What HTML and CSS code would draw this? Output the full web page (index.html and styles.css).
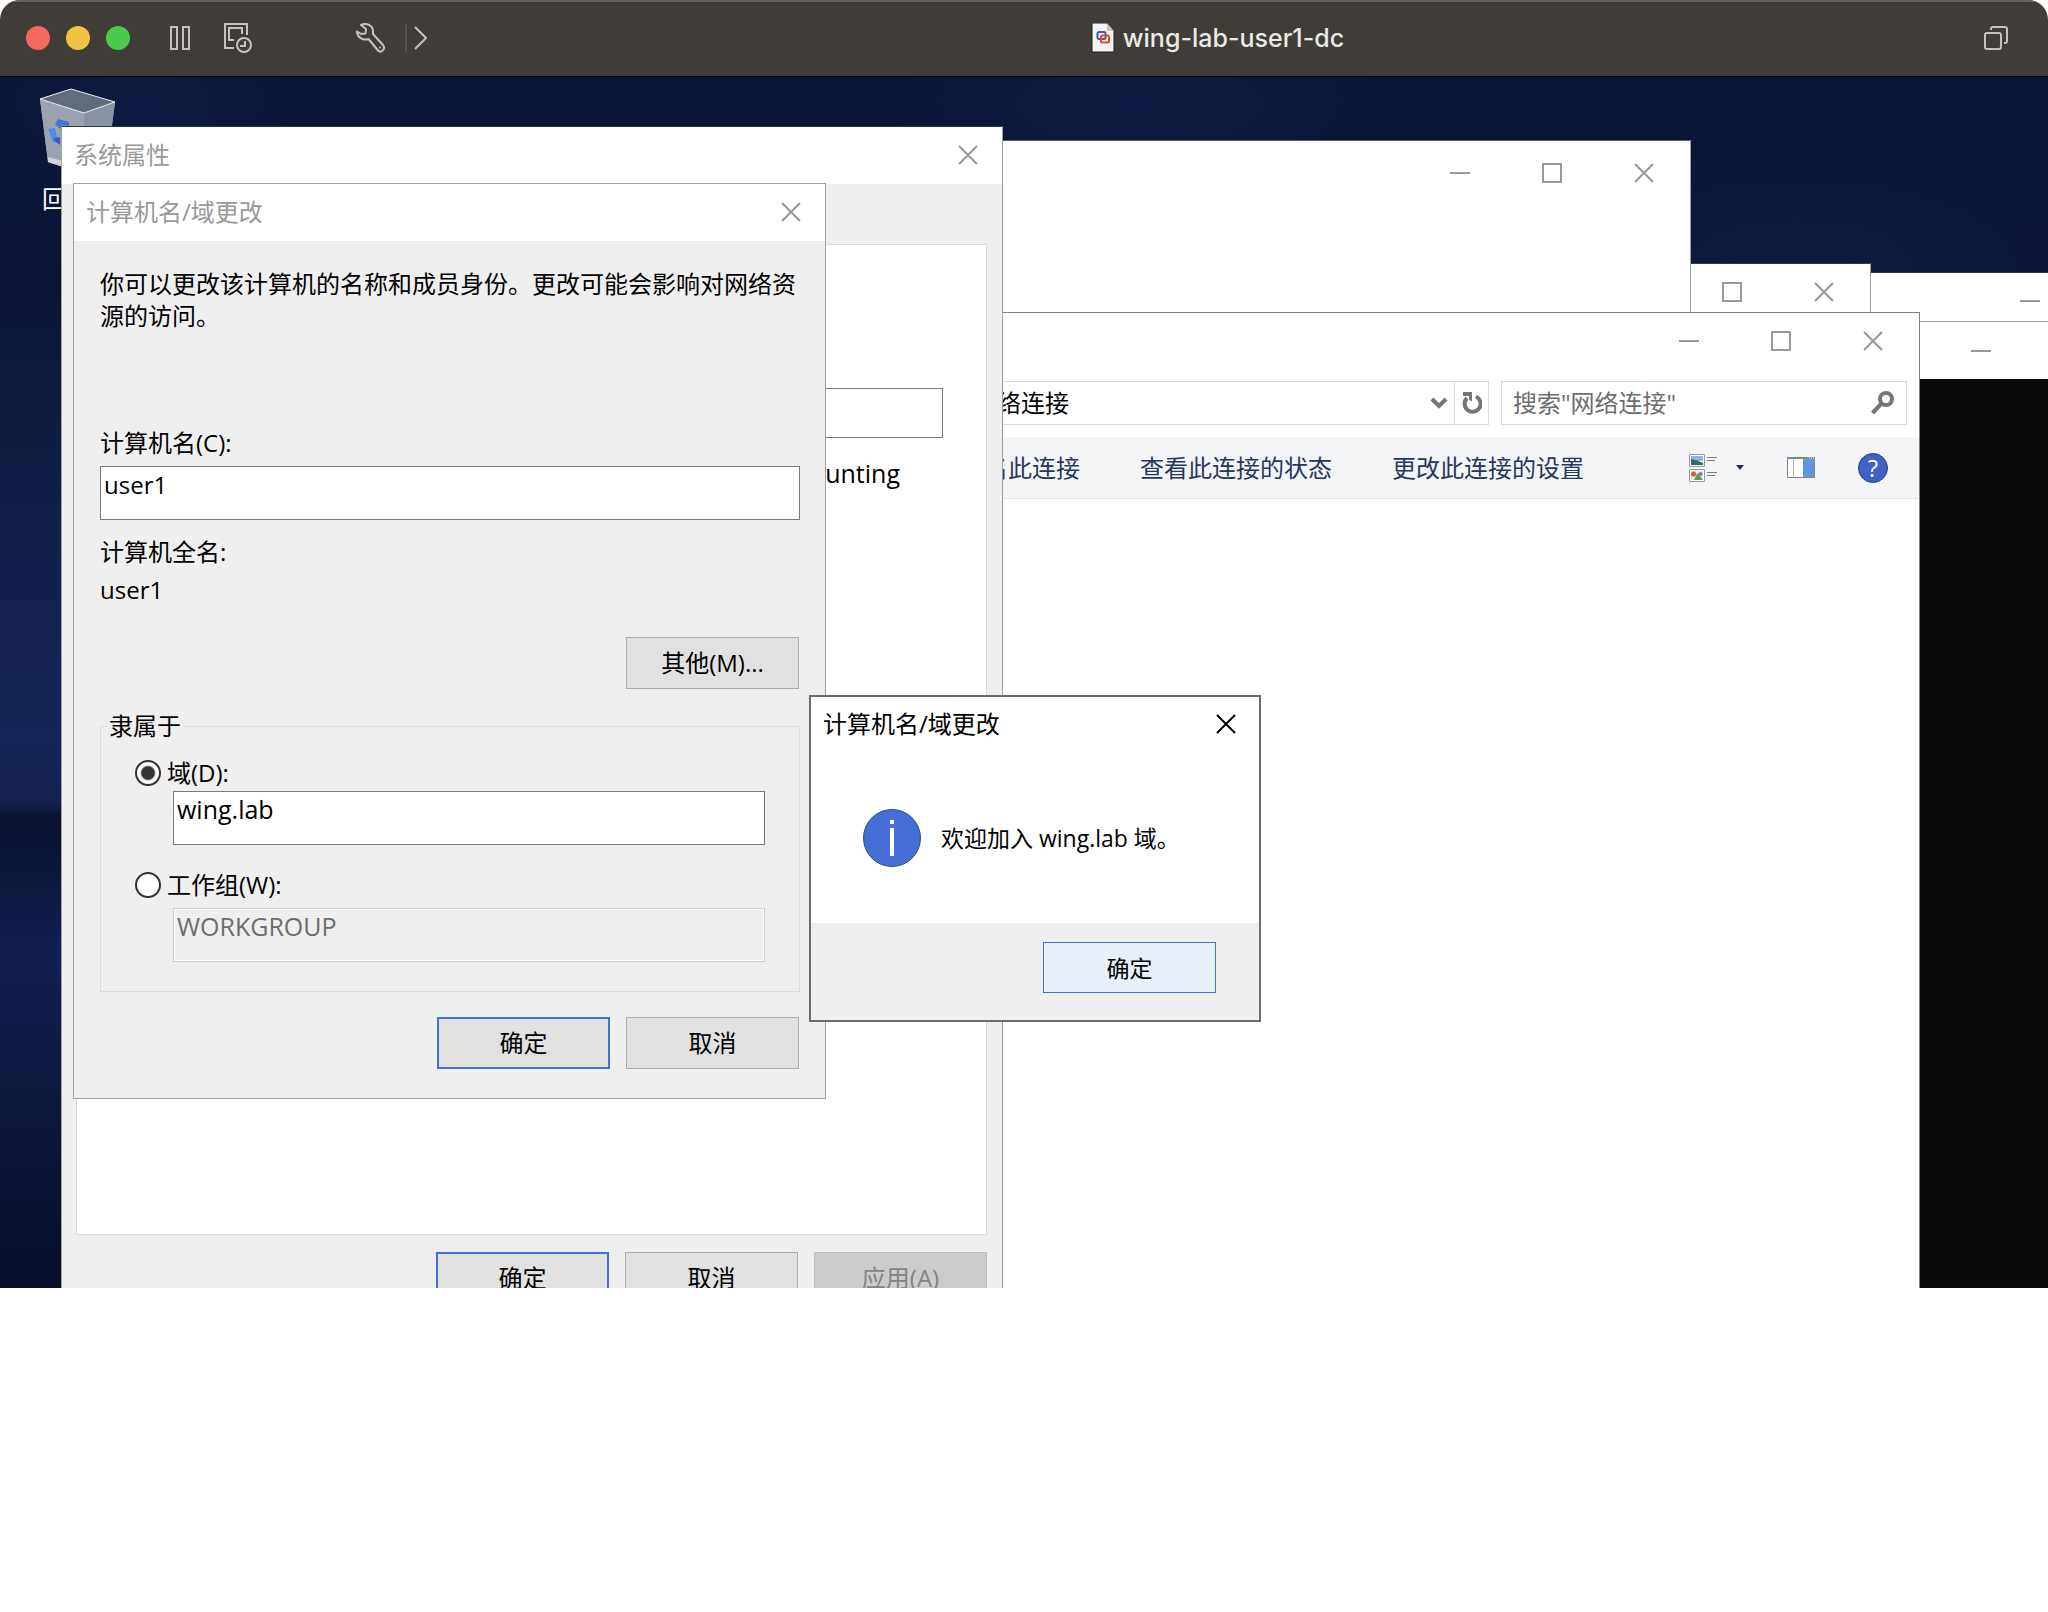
FILE: index.html
```html
<!DOCTYPE html>
<html lang="zh-CN">
<head>
<meta charset="utf-8">
<title>wing-lab-user1-dc</title>
<link rel="stylesheet" href="styles.css">
</head>
<body>
<svg class="symbols" aria-hidden="true">
  <symbol id="min" viewBox="0 0 20 20"><path d="M0 10H20" stroke="currentColor" stroke-width="2"/></symbol>
  <symbol id="max" viewBox="0 0 20 20"><path d="M1 1H19V19H1Z" fill="none" stroke="currentColor" stroke-width="2"/></symbol>
  <symbol id="close" viewBox="0 0 20 20"><path d="M1 1L19 19M19 1L1 19" stroke="currentColor" stroke-width="2"/></symbol>
</svg>

<main class="vm">
  <header class="vm-bar">
    <div class="vm-left">
      <div class="lights">
        <button class="light red" aria-label="关闭"></button>
        <button class="light yellow" aria-label="最小化"></button>
        <button class="light green" aria-label="全屏"></button>
      </div>
      <button class="tool pause" aria-label="暂停">
        <svg width="20" height="24" viewBox="0 0 20 24" fill="none" stroke="currentColor" stroke-width="2"><path d="M1 1H7V23H1ZM13 1H19V23H13Z"/></svg>
      </button>
      <button class="tool snapshot" aria-label="快照">
        <svg width="28" height="30" viewBox="0 0 28 30" fill="none" stroke="currentColor" stroke-width="2"><path d="M23 12V1H1V25H10M18 11V5H5V17H10"/><circle cx="20" cy="22" r="7"/><path d="M21 18V23H16"/></svg>
      </button>
      <button class="tool wrench" aria-label="设置">
        <svg width="30" height="30" viewBox="0 0 30 30" fill="none" stroke="currentColor" stroke-width="2" stroke-linejoin="round"><path d="M5 2C10 -.5 17 2 17 8.500V11L27 22C30 26 25 30.500 22 27.500L12.500 16C7 18 1 14 1 8.500L5 11L9.500 10.500L10 6Z"/><circle cx="24" cy="24.500" r="1" fill="currentColor" stroke="none"/></svg>
      </button>
      <span class="divider"></span>
      <button class="tool" aria-label="展开">
        <svg width="13" height="24" viewBox="0 0 13 24" fill="none" stroke="currentColor" stroke-width="2"><path d="M1 1L12 12L1 23"/></svg>
      </button>
    </div>
    <h1 class="vm-title">
      <svg width="24" height="30" viewBox="0 0 24 30"><path d="M1 0H16L23 8V29H1Z" fill="#f4f4f4" stroke="#1f1d1b"/><path d="M16 0V8H23Z" fill="#c4c4c4"/><rect x="6.500" y="9" width="8" height="7" rx="1.500" fill="none" stroke="#3b5fae" stroke-width="2"/><rect x="10" y="12.500" width="8" height="7" rx="1.500" fill="none" stroke="#ef4423" stroke-width="2"/></svg>
      <span>wing-lab-user1-dc</span>
    </h1>
    <button class="tool" aria-label="窗口">
      <svg width="24" height="24" viewBox="0 0 24 24" fill="none" stroke="currentColor" stroke-width="2"><rect x="1" y="7" width="16" height="16" rx="2"/><path d="M7 4V3Q7 1 9 1H21Q23 1 23 3V15Q23 17 21 17H20"/></svg>
    </button>
  </header>

  <section class="desktop">
    <div class="bin">
      <svg width="78" height="86" viewBox="0 0 78 86"><path d="M2 12L33 2L77 15L69 76L46 86L10 75Z" fill="#a9afb8"/><path d="M2 12L46 26L46 86L10 75Z" fill="#9ba3b0"/><path d="M46 26L77 15L69 76L46 86Z" fill="#8993a1"/><path d="M2 12L33 2L77 15L46 26Z" fill="#626b7b" stroke="#e6eaef"/><path d="M10 70L40 78V85L10 75Z" fill="#d0d3d6"/><path d="M17 37L20 32L31 35V39L24 38L22 42Z" fill="#3b78d8"/><path d="M10 42L17 41L19 50L22 50L22 57L15 55Z" fill="#4c8be6"/><path d="M15 52L22 50V58Z" fill="#3459b8"/></svg>
      <span>回</span>
    </div>

    <article class="window win-console-back">
      <div class="caption"><button class="cap" aria-label="最小化"><svg><use href="#min"/></svg></button><button class="cap" aria-label="最大化"><svg><use href="#max"/></svg></button><button class="cap" aria-label="关闭"><svg><use href="#close"/></svg></button></div>
    </article>
    <article class="window win-console">
      <div class="caption"><button class="cap" aria-label="最小化"><svg><use href="#min"/></svg></button><button class="cap" aria-label="最大化"><svg><use href="#max"/></svg></button><button class="cap" aria-label="关闭"><svg><use href="#close"/></svg></button></div>
      <div class="terminal"></div>
    </article>
    <article class="window win-mid">
      <div class="caption"><button class="cap" aria-label="最大化"><svg><use href="#max"/></svg></button><button class="cap" aria-label="关闭"><svg><use href="#close"/></svg></button></div>
    </article>
    <article class="window win-top">
      <div class="caption tall"><button class="cap" aria-label="最小化"><svg><use href="#min"/></svg></button><button class="cap" aria-label="最大化"><svg><use href="#max"/></svg></button><button class="cap" aria-label="关闭"><svg><use href="#close"/></svg></button></div>
    </article>

    <article class="window win-network">
      <div class="caption"><button class="cap" aria-label="最小化"><svg><use href="#min"/></svg></button><button class="cap" aria-label="最大化"><svg><use href="#max"/></svg></button><button class="cap" aria-label="关闭"><svg><use href="#close"/></svg></button></div>
      <div class="address-row">
        <div class="address">
          <span class="path">网络连接</span>
          <button class="drop" aria-label="历史"><svg width="18" height="12" viewBox="0 0 18 12" fill="none" stroke="#757575" stroke-width="4"><path d="M2 2L9 9L16 2"/></svg></button>
          <button class="refresh" aria-label="刷新"><svg width="20" height="22" viewBox="0 0 20 22"><path d="M14 4.500A8 8 0 1 1 5 6" fill="none" stroke="#757575" stroke-width="4"/><path d="M1 0H10V9.500L7 7.500V4H1Z" fill="#757575"/></svg></button>
        </div>
        <div class="search">
          <input type="text" aria-label="搜索" placeholder='搜索"网络连接"'>
          <svg width="23" height="24" viewBox="0 0 23 24" fill="none" stroke="#757575" stroke-width="4"><circle cx="15" cy="8" r="6"/><path d="M10.500 12.500L1.500 22"/></svg>
        </div>
      </div>
      <nav class="commands">
        <button>重命名此连接</button>
        <button>查看此连接的状态</button>
        <button>更改此连接的设置</button>
        <div class="view-tools">
          <button class="view" aria-label="视图"><svg width="28" height="28" viewBox="0 0 28 28"><path d="M.5.5H15.500V12.500H.5ZM.5 15.500H15.500V27.500H.5Z" fill="#fff" stroke="#9a9a9a"/><path d="M2 2H14V7H2Z" fill="#8db4ee"/><path d="M2 5Q8 6 14 9V11H2Z" fill="#35665c"/><path d="M2 17H14V26H2Z" fill="#e1ecdf"/><circle cx="4.500" cy="20" r="2.500" fill="#d65a2c"/><circle cx="11.500" cy="20" r="2" fill="#8c62cf"/><path d="M5 26L8.500 19L14 26Z" fill="#5c9a4c"/><path d="M18 3.500H28M18 6.500H26M18 18.500H28M18 21.500H26" stroke="#7a7a7a"/></svg></button>
          <button class="caret" aria-label="更多"><svg width="8" height="5" viewBox="0 0 8 5"><path d="M0 0H8L4 5Z" fill="#1f2f5c"/></svg></button>
          <button class="pane" aria-label="预览窗格"><svg width="28" height="21" viewBox="0 0 28 21"><path d="M.5.5H27.500V20.500H.5Z" fill="#fbfbfb" stroke="#80868c"/><path d="M0 0H28V2H0Z" fill="#80868c"/><path d="M6.500 2V20" stroke="#b4b4b4"/><path d="M16 2H27V20H16Z" fill="#6496e0"/><path d="M22 1H27" stroke="#fff" stroke-dasharray="1 1"/></svg></button>
          <button class="help" aria-label="帮助">?</button>
        </div>
      </nav>
    </article>

    <article class="window win-system">
      <header class="titlebar"><h2>系统属性</h2><button class="x" aria-label="关闭"><svg><use href="#close"/></svg></button></header>
      <div class="system-body">
        <div class="tab-panel">
          <input type="text" class="description" aria-label="计算机描述">
          <p class="example">Accounting</p>
        </div>
        <div class="actions">
          <button class="btn default">确定</button>
          <button class="btn">取消</button>
          <button class="btn" disabled>应用(A)</button>
        </div>
      </div>
    </article>

    <article class="window win-rename">
      <header class="titlebar"><h2>计算机名/域更改</h2><button class="x" aria-label="关闭"><svg><use href="#close"/></svg></button></header>
      <form class="rename-body">
        <p class="intro">你可以更改该计算机的名称和成员身份。更改可能会影响对网络资源的访问。</p>
        <label for="pc">计算机名(C):</label>
        <input type="text" id="pc" value="user1">
        <p class="full-label">计算机全名:</p>
        <p class="full-name">user1</p>
        <button type="button" class="btn more">其他(M)...</button>
        <fieldset>
          <legend>隶属于</legend>
          <label class="choice"><input type="radio" name="member" checked>域(D):</label>
          <input type="text" class="domain" aria-label="域" value="wing.lab">
          <label class="choice second"><input type="radio" name="member">工作组(W):</label>
          <input type="text" class="workgroup" aria-label="工作组" value="WORKGROUP" disabled>
        </fieldset>
        <div class="actions">
          <button type="button" class="btn default">确定</button>
          <button type="button" class="btn">取消</button>
        </div>
      </form>
    </article>

    <article class="window win-message" role="alertdialog">
      <header class="titlebar"><h2>计算机名/域更改</h2><button class="x" aria-label="关闭"><svg><use href="#close"/></svg></button></header>
      <div class="message">
        <svg width="58" height="58" viewBox="0 0 58 58"><circle cx="29" cy="29" r="28.500" fill="#456fd6" stroke="#2c4c90"/><path d="M27 11H31V15H27ZM27 19H31V47H27Z" fill="#fff"/></svg>
        <p>欢迎加入 wing.lab 域。</p>
      </div>
      <footer><button class="btn hot">确定</button></footer>
    </article>
  </section>
</main>
</body>
</html>
```
FILE: styles.css
```css
* { box-sizing: border-box; }

body {
  margin: 0;
  background: #fff;
  color: #000;
  font: 24px/32px "Open Sans", "Noto Sans CJK SC", sans-serif;
}

h1, h2, p { margin: 0; font-weight: 400; }

button, input {
  margin: 0;
  font: inherit;
  color: inherit;
}

button {
  padding: 0;
  border: 0;
  background: none;
}

svg { display: block; flex: none; }

.symbols { position: absolute; width: 0; height: 0; }

/* Virtual machine frame */
.vm { overflow: hidden; border-radius: 20px 20px 0 0; }

.vm-bar {
  display: flex;
  align-items: center;
  height: 77px;
  padding: 0 40px 2px 26px;
  background: #403c38;
  border-top: 2px solid #66625f;
  border-bottom: 1px solid #000;
  color: #c5c2bf;
}

.vm-left { display: flex; align-items: center; }
.lights { display: flex; gap: 16px; margin-right: 40px; }
.light { width: 24px; height: 24px; border-radius: 50%; }
.red { background: #f16b5c; }
.yellow { background: #f2c243; }
.green { background: #4dc94c; }
.snapshot { margin-left: 34px; }
.wrench { margin-left: 104px; }
.divider { width: 2px; height: 28px; margin: 0 7px 0 19px; background: #55514e; }

.vm-title {
  display: flex;
  flex: 1;
  align-items: center;
  justify-content: center;
  gap: 8px;
  padding-left: 24px;
  color: #ebe9e7;
  font: 500 25px/32px Inter, sans-serif;
}

/* Windows desktop */
.desktop {
  position: relative;
  height: 1211px;
  overflow: hidden;
  background:
    radial-gradient(ellipse 160px 90px at 140px 30px, #13205080, transparent),
    radial-gradient(ellipse 260px 90px at 1140px 30px, #13225080, transparent),
    radial-gradient(ellipse 300px 120px at 1800px 190px, #13205080, transparent),
    linear-gradient(#0a1535, #0b1433 18%, #101d42 30%, #13204c 42%, #17245a 55%, #131f4c 60%, #0a1230 61%, #0a1434 64%, #131f52 72%, #0f1940 82%, #08112e 94%, #060e28);
}

.bin {
  position: absolute;
  left: 38px;
  top: 10px;
  display: flex;
  flex-direction: column;
  gap: 10px;
  color: #fff;
}
.bin span { padding-left: 4px; }

.window {
  position: absolute;
  display: flex;
  flex-direction: column;
  background: #fff;
  border: 1px solid #a0a0a0;
}

.caption { display: flex; justify-content: flex-end; height: 56px; color: #999; }
.caption.tall { height: 64px; }
.cap { display: grid; place-items: center; width: 92px; }
.cap svg, .x svg { width: 20px; height: 20px; }

.win-top { left: 800px; top: 63px; width: 891px; height: 300px; border-top-color: #5c6274; }
.win-mid { left: 1400px; top: 186px; width: 471px; height: 200px; border-top-color: #2c364c; }
.win-console-back { left: 1500px; top: 195px; width: 761px; height: 200px; border-top-color: #2c364c; }
.win-console { left: 1450px; top: 244px; width: 762px; bottom: 0; border-bottom: 0; }
.win-console .caption { height: 57px; }
.terminal { flex: 1; background: #0a0a0a; }

/* Network connections */
.win-network { left: 900px; top: 235px; width: 1020px; bottom: 0; border-color: #808080; border-bottom: 0; }

.address-row { display: flex; gap: 12px; height: 44px; margin: 12px 12px 12px 0; }
.address { display: flex; align-items: center; flex: 1; border: 1px solid #d9d9d9; }
.path { flex: 1; padding-left: 71px; }
.drop { display: grid; place-items: center; width: 30px; height: 100%; }
.refresh { display: grid; place-items: center; width: 34px; height: 100%; border-left: 1px solid #d9d9d9; }

.search { display: flex; align-items: center; width: 406px; padding: 0 12px 0 11px; border: 1px solid #d9d9d9; }
.search input { flex: 1; min-width: 0; padding: 0; border: 0; background: none; }
.search input::placeholder { color: #6d6d6d; opacity: 1; }

.commands {
  display: flex;
  align-items: center;
  gap: 60px;
  height: 62px;
  padding: 0 31px 0 35px;
  background: #f4f5f7;
  border-bottom: 1px solid #e2e4e7;
  color: #28355c;
}
.view-tools { display: flex; align-items: center; margin-left: auto; }
.caret { margin-left: 19px; }
.pane { margin: 0 43px; }
.help {
  width: 30px;
  height: 30px;
  border: 1px solid #27407f;
  border-radius: 50%;
  background: #3f60c8;
  color: #fff;
  line-height: 28px;
}

/* Dialogs */
.titlebar {
  display: flex;
  align-items: center;
  justify-content: space-between;
  height: 57px;
  padding: 0 24px 2px 12px;
  background: #fff;
  color: #999;
}
.titlebar h2 { font-size: 24px; line-height: 32px; }

.btn {
  width: 173px;
  height: 52px;
  background: #e1e1e1;
  border: 1px solid #adadad;
}
.btn.default { border: 2px solid #456fd6; }
.btn.hot { height: 51px; background: #e8f0fa; border-color: #456fd6; font-size: 23px; }
.btn:disabled { background: #ccc; border-color: #bfbfbf; color: #838383; }

.actions { display: flex; justify-content: flex-end; gap: 16px; }

input[type="text"] { border: 1px solid #7a7a7a; border-radius: 0; background: #fff; }
.search input[type="text"] { border: 0; }

.win-system { left: 61px; top: 49px; width: 942px; background: #efefef; border-top-color: #2c364c; }
.system-body { padding: 60px 15px 32px 14px; }
.tab-panel {
  display: flex;
  flex-direction: column;
  align-items: flex-end;
  height: 991px;
  margin-bottom: 17px;
  padding: 143px 43px 0;
  background: #fff;
  border: 1px solid #d9d9d9;
}
.description { width: 560px; height: 50px; }
.example { padding: 19px 43px 0 0; font-size: 25px; }

.win-rename { left: 73px; top: 106px; width: 753px; background: #efefef; }
.rename-body { display: flex; flex-direction: column; padding: 27px 25px 29px 26px; }
.intro { margin-bottom: 95px; }
.rename-body input[type="text"] { height: 54px; margin-top: 7px; padding: 1px 3px 19px; }
.full-label { margin: 16px 0 6px; }
.more { align-self: flex-end; margin: 31px 0 21px; }
.rename-body .btn { margin-right: 1px; }
.rename-body .default { margin-right: 0; }

fieldset {
  display: flex;
  flex-direction: column;
  margin: 0 0 25px;
  padding: 15px 34px 29px;
  border: 1px solid #dcdcdc;
}
legend { margin-left: -28px; padding: 0 2px; }
.choice { display: flex; align-items: center; gap: 6px; }
.choice.second { margin-top: 24px; }
input[type="radio"] {
  appearance: none;
  width: 26px;
  height: 26px;
  border: 2px solid #333;
  border-radius: 50%;
  background: #fff;
}
input[type="radio"]:checked { background: radial-gradient(circle, #333 6px, #fff 8px); }
.domain, .workgroup { margin-left: 38px; font-size: 25px; }
.rename-body input.domain { margin-top: 2px; }
.rename-body input.workgroup {
  background: #efefef;
  border-color: #ccc;
  box-shadow: inset 0 0 0 1px #fff;
  color: #6d6d6d;
}

.win-message { left: 809px; top: 618px; width: 452px; border: 2px solid #6b6b6b; }
.win-message .titlebar { height: 56px; color: #000; padding-right: 23px; }
.message { display: flex; align-items: center; gap: 20px; height: 170px; padding-left: 52px; font-size: 23px; }
.win-message footer { display: flex; justify-content: flex-end; padding: 19px 43px 27px; background: #efefef; }
```
